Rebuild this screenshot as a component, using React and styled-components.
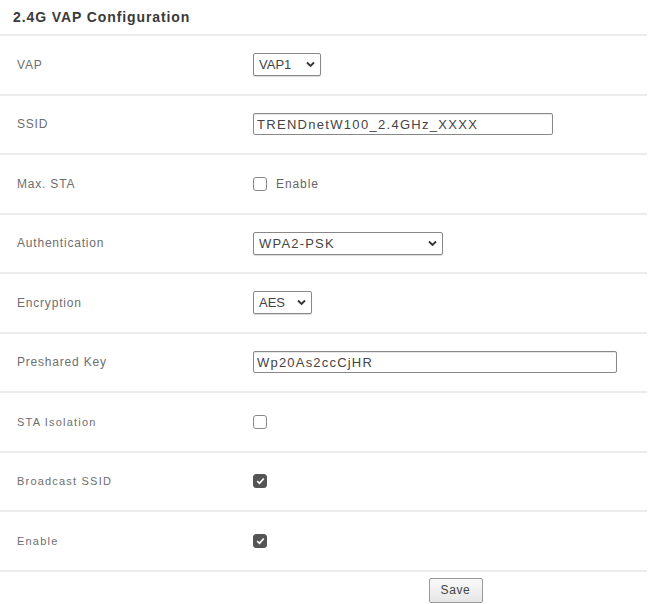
import React from "react";
import styled, { createGlobalStyle } from "styled-components";

const GlobalStyle = createGlobalStyle`
  html, body {
    margin: 0;
    padding: 0;
    background: #fff;
  }
  body {
    font-family: "Liberation Sans", Arial, sans-serif;
    color: #555;
  }
`;

const Page = styled.div`
  width: 647px;
`;

const Title = styled.h2`
  margin: 0;
  height: 36px;
  padding: 0 0 1px 13px;
  display: flex;
  align-items: center;
  font-size: 14px;
  font-weight: bold;
  letter-spacing: 0.9px;
  color: #3a3a3a;
  border-bottom: 2px solid #ececec;
  box-sizing: border-box;
`;

const Row = styled.div`
  display: grid;
  grid-template-columns: 253px 1fr;
  align-items: center;
  height: 59.5px;
  box-sizing: border-box;
  border-bottom: 2px solid #ececec;
`;

const Label = styled.div`
  padding-left: 17px;
  font-size: ${(p) => (p.small ? "11px" : "12px")};
  letter-spacing: ${(p) => (p.small ? "1.2px" : "0.8px")};
  color: #6e6e6e;
`;

const Control = styled.div`
  display: flex;
  align-items: center;
  gap: 9px;
`;

const SelectWrap = styled.span`
  position: relative;
  display: inline-flex;
  width: ${(p) => p.width}px;
  height: 23px;
`;

const Select = styled.select`
  appearance: none;
  width: 100%;
  height: 100%;
  box-sizing: border-box;
  border: 1px solid #888;
  border-radius: 2px;
  background: #fff;
  padding: 0 0 0 5px;
  font-family: "Liberation Sans", Arial, sans-serif;
  font-size: 13px;
  letter-spacing: ${(p) => p.spacing || 0}px;
  color: #444;
  box-shadow: 0 1px 1px rgba(0, 0, 0, 0.15);
`;

const Chevron = styled.svg`
  position: absolute;
  right: 6px;
  top: 8px;
  width: 9px;
  height: 7px;
  pointer-events: none;
`;

const TextInput = styled.input`
  width: ${(p) => p.width}px;
  height: 22px;
  box-sizing: border-box;
  border: 1px solid #888;
  border-radius: 2px;
  padding: 0 3px;
  font-family: "Liberation Sans", Arial, sans-serif;
  font-size: 13px;
  letter-spacing: ${(p) => p.spacing}px;
  color: #444;
  box-shadow: inset 0 1px 1px rgba(0, 0, 0, 0.1);
  outline: none;
`;

const Box = styled.span`
  display: inline-flex;
  align-items: center;
  justify-content: center;
  width: 14px;
  height: 14px;
  box-sizing: border-box;
  border-radius: 3px;
  border: 1px solid ${(p) => (p.checked ? "#555" : "#8a8a8a")};
  background: ${(p) => (p.checked ? "#555" : "#fff")};
`;

const CheckText = styled.span`
  font-size: 12px;
  letter-spacing: 0.9px;
  color: #666;
`;

const Footer = styled.div`
  display: flex;
  justify-content: center;
  padding: 6px 0 0 264px;
`;

const SaveButton = styled.button`
  width: 54px;
  height: 25px;
  border: 1px solid #999;
  border-radius: 2px;
  background: linear-gradient(#fafafa, #e6e6e6);
  font-family: "Liberation Sans", Arial, sans-serif;
  font-size: 12px;
  letter-spacing: 0.6px;
  color: #444;
`;

const DropSelect = ({ width, value, options, spacing }) => (
  <SelectWrap width={width}>
    <Select defaultValue={value} spacing={spacing}>
      {options.map((o) => (
        <option key={o}>{o}</option>
      ))}
    </Select>
    <Chevron viewBox="0 0 9 7">
      <path d="M1 1.5 L4.5 5 L8 1.5" fill="none" stroke="#333" strokeWidth="1.8" />
    </Chevron>
  </SelectWrap>
);

const Check = ({ checked }) => (
  <Box checked={checked}>
    {checked && (
      <svg width="9" height="8" viewBox="0 0 9 8">
        <path d="M1.2 4.2 L3.5 6.3 L7.8 1.5" fill="none" stroke="#fff" strokeWidth="1.7" />
      </svg>
    )}
  </Box>
);

export default function App() {
  return (
    <Page>
      <GlobalStyle />
      <Title>2.4G VAP Configuration</Title>
      <Row>
        <Label>VAP</Label>
        <Control>
          <DropSelect width={68} value="VAP1" options={["VAP1", "VAP2", "VAP3"]} />
        </Control>
      </Row>
      <Row>
        <Label>SSID</Label>
        <Control>
          <TextInput width={300} spacing={1.3} defaultValue="TRENDnetW100_2.4GHz_XXXX" />
        </Control>
      </Row>
      <Row>
        <Label>Max. STA</Label>
        <Control>
          <Check checked={false} />
          <CheckText>Enable</CheckText>
        </Control>
      </Row>
      <Row>
        <Label>Authentication</Label>
        <Control>
          <DropSelect
            width={190}
            spacing={1.2}
            value="WPA2-PSK"
            options={["WPA2-PSK", "WPA-PSK", "None"]}
          />
        </Control>
      </Row>
      <Row>
        <Label>Encryption</Label>
        <Control>
          <DropSelect width={59} value="AES" options={["AES", "TKIP"]} />
        </Control>
      </Row>
      <Row>
        <Label>Preshared Key</Label>
        <Control>
          <TextInput width={364} spacing={1.2} defaultValue="Wp20As2ccCjHR" />
        </Control>
      </Row>
      <Row>
        <Label small>STA Isolation</Label>
        <Control>
          <Check checked={false} />
        </Control>
      </Row>
      <Row>
        <Label small>Broadcast SSID</Label>
        <Control>
          <Check checked />
        </Control>
      </Row>
      <Row>
        <Label small>Enable</Label>
        <Control>
          <Check checked />
        </Control>
      </Row>
      <Footer>
        <SaveButton>Save</SaveButton>
      </Footer>
    </Page>
  );
}
